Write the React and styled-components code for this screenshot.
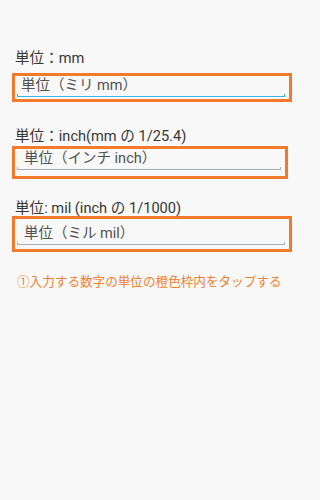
import React from "react";
import styled, { createGlobalStyle } from "styled-components";

const Global = createGlobalStyle`
  html, body {
    margin: 0;
    padding: 0;
    background: #f8f8f8;
  }
  body {
    font-family: "Roboto", "Noto Sans CJK JP", sans-serif;
  }
`;

const Page = styled.div`
  width: 300px;
  height: 500px;
  box-sizing: border-box;
  padding: 50px 8px 0 12px;
  background: #f8f8f8;
`;

const Label = styled.div`
  margin-top: ${(p) => p.gap}px;
  font-size: 14.6px;
  line-height: 16px;
  color: #363636;
  padding-left: 3px;
  white-space: nowrap;
`;

const Frame = styled.div`
  margin-top: ${(p) => p.gap}px;
  width: ${(p) => p.w}px;
  height: ${(p) => p.h}px;
  box-sizing: border-box;
  border: 3px solid #f27a2b;
  display: flex;
  flex-direction: column;
  justify-content: flex-end;
  padding: 0 4px ${(p) => p.pb}px 2px;
`;

const Value = styled.div`
  font-size: 14.5px;
  line-height: 18px;
  color: #505050;
  padding-left: ${(p) => p.indent}px;
  white-space: nowrap;
`;

const Underline = styled.div`
  position: relative;
  height: 1px;
  margin-top: 1px;
  background: ${(p) => (p.active ? "#33b5e5" : "#a8b0b6")};

  &::before,
  &::after {
    content: "";
    position: absolute;
    bottom: 0;
    width: 1px;
    height: 3px;
    background: inherit;
  }
  &::before {
    left: 0;
  }
  &::after {
    right: 0;
  }
`;

const Note = styled.div`
  margin-top: 22px;
  padding-left: 5px;
  font-size: 12.6px;
  line-height: 15px;
  color: #f0802f;
  white-space: nowrap;
`;

const fields = [
  { label: "単位：mm", value: "単位（ミリ mm）", lg: 0, fg: 7, w: 280, h: 29, pb: 2, indent: 4, active: true },
  { label: "単位：inch(mm の 1/25.4)", value: "単位（インチ inch）", lg: 26, fg: 2, w: 276, h: 33, pb: 6, indent: 7 },
  { label: "単位: mil (inch の 1/1000)", value: "単位（ミル mil）", lg: 21, fg: 0, w: 280, h: 36, pb: 4, indent: 7 },
];

const App = () => {
  return (
    <Page>
      <Global />
      {fields.map((f) => (
        <React.Fragment key={f.label}>
          <Label gap={f.lg}>{f.label}</Label>
          <Frame gap={f.fg} w={f.w} h={f.h} pb={f.pb}>
            <Value indent={f.indent}>{f.value}</Value>
            <Underline active={f.active} />
          </Frame>
        </React.Fragment>
      ))}
      <Note>①入力する数字の単位の橙色枠内をタップする</Note>
    </Page>
  );
};

export default App;
